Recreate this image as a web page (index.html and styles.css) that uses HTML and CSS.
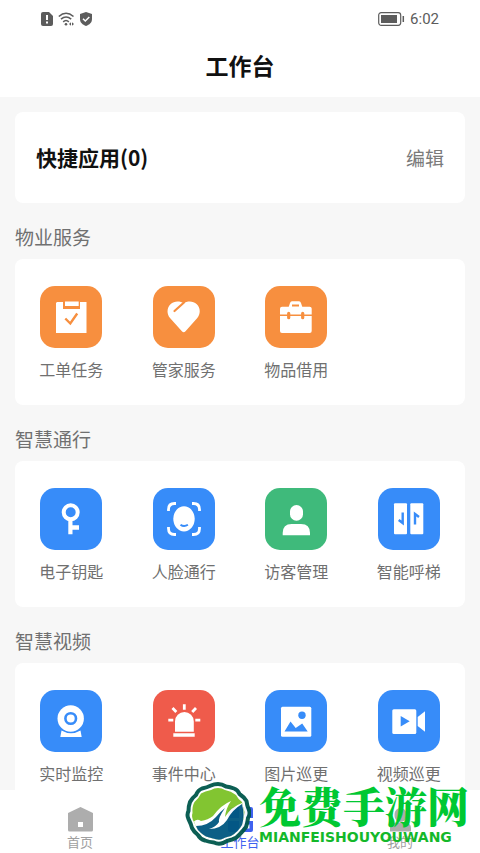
FILE: index.html
```html
<!DOCTYPE html>
<html lang="zh-CN">
<head>
    <meta charset="UTF-8">
    <meta name="viewport" content="width=device-width, initial-scale=1.0">
    <title>工作台</title>
    <link rel="stylesheet" href="styles.css">
</head>
<body>
    <div class="app">
        <header class="header">
            <div class="status-bar">
                <div class="status-icons">
                    <svg width="12" height="14" viewBox="0 0 12 14">
                        <path d="M2 0h6l4 4v8a2 2 0 0 1-2 2H2a2 2 0 0 1-2-2V2a2 2 0 0 1 2-2z" fill="#5c5c5c"/>
                        <path d="M6 3v5M6 9.500v2" stroke="#fff" stroke-width="2"/>
                    </svg>
                    <svg width="17" height="14" viewBox="0 0 17 14" fill="none" stroke="#5c5c5c" stroke-width="1.6">
                        <path d="M.8 4.5Q8 -2 15.5 4.5M3 7.2Q8 2.8 13.2 7.2M5.2 9.8Q8 7.2 10.8 9.8"/>
                        <circle cx="8" cy="12.3" r="1.3" fill="#5c5c5c" stroke="none"/>
                        <path d="M13 10.2l-2 1.8 2 1.8zM14 10.2l2 1.8-2 1.8z" fill="#5c5c5c" stroke="none"/>
                    </svg>
                    <svg width="12" height="14" viewBox="0 0 12 14">
                        <path d="M6 0l6 2v5c0 3.500-2.500 5.700-6 7-3.500-1.300-6-3.500-6-7V2z" fill="#5c5c5c"/>
                        <path d="M3 6.700l2.300 2.300L9.300 5" fill="none" stroke="#fff" stroke-width="1.500"/>
                    </svg>
                </div>
                <div class="status-right">
                    <svg width="27" height="14" viewBox="0 0 27 14">
                        <rect x=".7" y=".7" width="22" height="12.600" rx="2.500" fill="none" stroke="#5c5c5c" stroke-width="1.200"/>
                        <rect x="3" y="3" width="16" height="8" fill="#5c5c5c"/>
                        <path d="M25.300 4v6" stroke="#5c5c5c" stroke-width="1.500"/>
                    </svg>
                    <span class="time">6:02</span>
                </div>
            </div>
            <h1 class="page-title">工作台</h1>
        </header>

        <main class="content">
            <section class="card quick">
                <h2 class="quick-title">快捷应用(0)</h2>
                <button type="button" class="edit-btn">编辑</button>
            </section>

            <section>
                <h2 class="section-title">物业服务</h2>
                <div class="card grid">
                    <a href="#" class="item">
                        <svg class="tile orange" viewBox="0 0 62 62">
                            <path d="M17 16h6v7h17v-7h6.500v31H16V17z" fill="#fff"/>
                            <path d="M25 15.500h13.700V20H25z" fill="#fff"/>
                            <path d="M25.300 32.500l5 5L37.200 27.500" fill="none" stroke="#f78f3f" stroke-width="2.400"/>
                        </svg>
                        <span>工单任务</span>
                    </a>
                    <a href="#" class="item">
                        <svg class="tile orange" viewBox="0 0 62 62">
                            <path d="M30.700 17.300C34 15 40 14.500 43.800 18.300c4 4 3.700 10 .5 13.600L32.500 45.300q-1.800 2-3.600 0L17 31.900c-3.200-3.600-3.500-9.600.5-13.600 3.800-3.800 9.800-3.300 13.200-1z" fill="#fff"/>
                            <path d="M31 16.500L21.500 25" stroke="#f78f3f" stroke-width="2.200" stroke-linecap="round"/>
                        </svg>
                        <span>管家服务</span>
                    </a>
                    <a href="#" class="item">
                        <svg class="tile orange" viewBox="0 0 62 62">
                            <rect x="15" y="20.700" width="31.700" height="26.300" rx="2" fill="#fff"/>
                            <path d="M23.500 21.500l1.500-4.500q.5-1.700 2-1.700h7q1.500 0 2 1.700l1.500 4.500z" fill="#fff"/>
                            <path d="M27 19.500h7" stroke="#f78f3f" stroke-width="1.800"/>
                            <path d="M15 29.300h32" stroke="#f78f3f" stroke-width="1.600"/>
                            <path d="M23.700 27.300v4.400M37.700 27.300v4.400" stroke="#f78f3f" stroke-width="3.200" stroke-linecap="round"/>
                        </svg>
                        <span>物品借用</span>
                    </a>
                </div>
            </section>

            <section>
                <h2 class="section-title">智慧通行</h2>
                <div class="card grid">
                    <a href="#" class="item">
                        <svg class="tile blue" viewBox="0 0 62 62">
                            <circle cx="30.700" cy="24.300" r="7" fill="none" stroke="#fff" stroke-width="4"/>
                            <path d="M28.300 31h4.200v6.300H39v4.400h-6.500v4.600h-4.200z" fill="#fff"/>
                        </svg>
                        <span>电子钥匙</span>
                    </a>
                    <a href="#" class="item">
                        <svg class="tile blue" viewBox="0 0 62 62" fill="none">
                            <path d="M15.500 23v-1.500q0-6 6-6H23M39 15.500h1.500q6 0 6 6V23M46.500 39v1.500q0 6-6 6H39M23 46.500h-1.500q-6 0-6-6V39" stroke="#fff" stroke-width="2.800"/>
                            <ellipse cx="31" cy="30.800" rx="10.700" ry="12.600" fill="#fff"/>
                            <path d="M27.500 36.700q3.500 2.600 7.400 0" stroke="#378cf9" stroke-width="1.900"/>
                        </svg>
                        <span>人脸通行</span>
                    </a>
                    <a href="#" class="item">
                        <svg class="tile green" viewBox="0 0 62 62" fill="#fff">
                            <rect x="25" y="17" width="13" height="15.700" rx="6.500"/>
                            <path d="M17.700 47.300V45q0-9 9-9H36q9 0 9 9v2.300z"/>
                        </svg>
                        <span>访客管理</span>
                    </a>
                    <a href="#" class="item">
                        <svg class="tile blue" viewBox="0 0 62 62">
                            <rect x="16" y="15.300" width="13" height="31" rx="1" fill="#fff"/>
                            <rect x="32.300" y="15.300" width="13" height="31" rx="1" fill="#fff"/>
                            <path d="M24.700 24.500v10.500l-4-3M37 36.500v-10.500l4 3" fill="none" stroke="#378cf9" stroke-width="2.400"/>
                        </svg>
                        <span>智能呼梯</span>
                    </a>
                </div>
            </section>

            <section>
                <h2 class="section-title">智慧视频</h2>
                <div class="card grid">
                    <a href="#" class="item">
                        <svg class="tile blue" viewBox="0 0 62 62">
                            <path d="M21.500 40.500q9.500 5.500 19 0l1.200 6.500H20.300z" fill="#fff"/>
                            <circle cx="30.700" cy="28.500" r="13.200" fill="#fff"/>
                            <circle cx="30.700" cy="28.500" r="5.300" fill="none" stroke="#378cf9" stroke-width="2.600"/>
                        </svg>
                        <span>实时监控</span>
                    </a>
                    <a href="#" class="item">
                        <svg class="tile red" viewBox="0 0 62 62">
                            <path d="M22 41.700V31.500a9.400 9.400 0 0 1 18.800 0v10.200zM20.300 43.200h21.400v3.600H20.300z" fill="#fff"/>
                            <path d="M31.300 14.300v5.400M15.300 30.200h5M42.300 30.200h5M19.500 18l3.800 4M43 18l-3.800 4" stroke="#fff" stroke-width="2.800"/>
                        </svg>
                        <span>事件中心</span>
                    </a>
                    <a href="#" class="item">
                        <svg class="tile blue" viewBox="0 0 62 62">
                            <rect x="16" y="16.700" width="30.300" height="30" rx="1.500" fill="#fff"/>
                            <circle cx="37" cy="25.300" r="3.700" fill="#378cf9"/>
                            <path d="M19.500 41.500L25.500 31.500l5.200 6.500 6.500-4.500 5.500 8z" fill="#378cf9"/>
                        </svg>
                        <span>图片巡更</span>
                    </a>
                    <a href="#" class="item">
                        <svg class="tile blue" viewBox="0 0 62 62">
                            <rect x="14.300" y="19.300" width="24" height="24.700" rx="1.500" fill="#fff"/>
                            <path d="M39.700 27L47 21.300v20.400L39.700 36z" fill="#fff"/>
                            <path d="M22.700 26l9 5.300-9 5.200z" fill="#378cf9"/>
                        </svg>
                        <span>视频巡更</span>
                    </a>
                </div>
            </section>
        </main>

        <nav class="tabbar">
            <a href="#" class="tab">
                <svg class="tab-icon" viewBox="0 0 25 25">
                    <path d="M12.500 0L25 6v17a1.500 1.500 0 0 1-1.500 1.500h-22A1.500 1.500 0 0 1 0 23V6z" fill="#adadad"/>
                    <path d="M10 15h5v5h-5z" fill="#fff"/>
                </svg>
                <span>首页</span>
            </a>
            <a href="#" class="tab active">
                <svg class="tab-icon" viewBox="0 0 25 25">
                    <path d="M2 0h9v11H0V2q0-2 2-2zM14 0h9q2 0 2 2v9H14zM0 14h11v11H2q-2 0-2-2zM14 14h11v9q0 2-2 2h-9z" fill="#3f62f0"/>
                    <path d="M17.500 17.500h4v4h-4z" fill="#fff"/>
                </svg>
                <span>工作台</span>
            </a>
            <a href="#" class="tab">
                <svg class="tab-icon" viewBox="0 0 25 25" fill="#adadad">
                    <rect x="6.500" y="1" width="12" height="14" rx="6"/>
                    <path d="M2 24.500V21q0-5 6-5.500h9q6 .5 6 5.500v3.500z"/>
                </svg>
                <span>我的</span>
            </a>
        </nav>

        <div class="watermark">
            <svg class="watermark-logo" viewBox="0 0 66 64">
                <path d="M33 2Q37 2 41 4.500Q45 5 49 6.500Q53 8 54.500 12Q59 15 61.500 19Q62 24 64 28Q65.500 32 63 36Q62.500 41 61 45Q58 49 55 52Q52 56 47 57.500Q42 58.500 38 61Q33 62.500 29 60.500Q24 60 20 58.500Q15 57 13 53Q9 50 7 46Q6 42 3.500 37Q1.500 33 3.500 29Q3.500 24 5 20Q7 16 11 13Q13 8 17 6.500Q22 5.500 26 3.500Q29 2 33 2z" fill="#fff" stroke="#00574b" stroke-width="4" stroke-linejoin="round"/>
                <path d="M33 6Q37 6 40 8Q46 9 51 13Q53 17 57 20Q58 25 59.500 30Q59 36 57 43Q53 50 46 54Q40 55 36 57.500Q32 58 28 56.500Q20 55 16 51Q11 46 9 40Q6 35 7.500 31Q7 24 9.500 20Q14 16 16 11.500Q20 9 26 8Q29 6 33 6z" fill="#7cc227"/>
                <path d="M9 39.500Q12 36.500 16 39Q23 38 28 34Q36 23 46 19Q41 26 40 35Q46 25 57 21L58 24Q60 34 57 43Q53 50 46 54Q40 55 36 57.500Q32 58 28 56.500Q20 55 16 51Q11 46 9 39.500z" fill="#fff"/>
                <path d="M11 44Q23 44 31 35Q36 29 40 26Q33 36 34 40Q31 45 24 47Q36 47 42 38Q47 28 57 22Q60 34 57 43Q53 50 46 54Q40 55 36 57.500Q32 58 28 56.500Q20 55 16 51Q12 48 11 44z" fill="#005780"/>
            </svg>
            <div class="watermark-text">
                <span class="watermark-name">免费手游网</span>
                <span class="watermark-site">MIANFEISHOUYOUWANG</span>
            </div>
        </div>
    </div>
</body>
</html>
```

FILE: styles.css
```css
* {
    box-sizing: border-box;
}

body {
    margin: 0;
    font-family: "Noto Sans CJK SC", sans-serif;
    background: #f7f7f7;
    color: #707070;
}

h1, h2 {
    margin: 0;
}

a {
    color: inherit;
    text-decoration: none;
}

svg {
    display: block;
}

.app {
    position: relative;
    display: flex;
    flex-direction: column;
    height: 100vh;
    overflow: hidden;
}

/* header */
.header {
    flex: none;
    background: #fff;
    padding-bottom: 5px;
}

.status-bar {
    display: flex;
    justify-content: space-between;
    align-items: center;
    height: 38px;
    padding: 0 41px;
}

.status-icons {
    display: flex;
    gap: 5px;
}

.status-right {
    display: flex;
    align-items: center;
    gap: 5px;
}

.time {
    font-family: Roboto, sans-serif;
    font-size: 15px;
    line-height: 20px;
    color: #5c5c5c;
}

.page-title {
    font-size: 23px;
    line-height: 54px;
    font-weight: 700;
    text-align: center;
    color: #111;
}

/* content */
.content {
    flex: 1;
    min-height: 0;
    overflow-y: auto;
    scrollbar-width: none;
    padding: 15px 15px 0;
}

.card {
    background: #fff;
    border-radius: 8px;
}

.quick {
    display: flex;
    justify-content: space-between;
    align-items: center;
    padding: 28px 21px;
}

.quick-title {
    font-size: 21px;
    line-height: 35px;
    font-weight: 700;
    color: #111;
}

.edit-btn {
    padding: 0;
    border: none;
    background: none;
    font-family: inherit;
    font-size: 19px;
    line-height: 28px;
    color: #7a7a7a;
    cursor: pointer;
}

.section-title {
    padding: 20px 0 8px;
    font-size: 19px;
    line-height: 28px;
    font-weight: 400;
}

.grid {
    display: grid;
    grid-template-columns: repeat(4, 1fr);
    padding: 27px 0 24px;
}

.item {
    display: flex;
    flex-direction: column;
    align-items: center;
    gap: 9px;
    font-size: 16px;
    line-height: 24px;
}

.tile {
    width: 62px;
    height: 62px;
    border-radius: 15px;
}

.orange {
    background: #f78f3f;
}

.blue {
    background: #378cf9;
}

.green {
    background: #3fba7b;
}

.red {
    background: #ef5b4b;
}

/* bottom tabs */
.tabbar {
    flex: none;
    display: flex;
    height: 63px;
    padding-top: 17px;
    background: #fff;
}

.tab {
    flex: 1;
    display: flex;
    flex-direction: column;
    align-items: center;
    gap: 1px;
    font-size: 13px;
    line-height: 18px;
    color: #a0a0a0;
}

.tab-icon {
    width: 25px;
    height: 25px;
}

.tab.active {
    color: #3f62f0;
}

/* site mark over the bottom right corner */
.watermark {
    position: absolute;
    right: 11px;
    bottom: 7px;
    display: flex;
    align-items: center;
    gap: 8px;
    pointer-events: none;
}

.watermark-logo {
    width: 66px;
    height: 64px;
    opacity: 0.95;
}

.watermark-text {
    display: flex;
    flex-direction: column;
}

.watermark-name {
    font-family: "Noto Serif CJK SC", "Noto Sans CJK SC", serif;
    font-size: 42px;
    line-height: 46px;
    font-weight: 900;
    color: #00c832;
}

.watermark-site {
    font-family: "DejaVu Sans", sans-serif;
    font-size: 14px;
    line-height: 18px;
    font-weight: 700;
    color: #14b82a;
}
```
